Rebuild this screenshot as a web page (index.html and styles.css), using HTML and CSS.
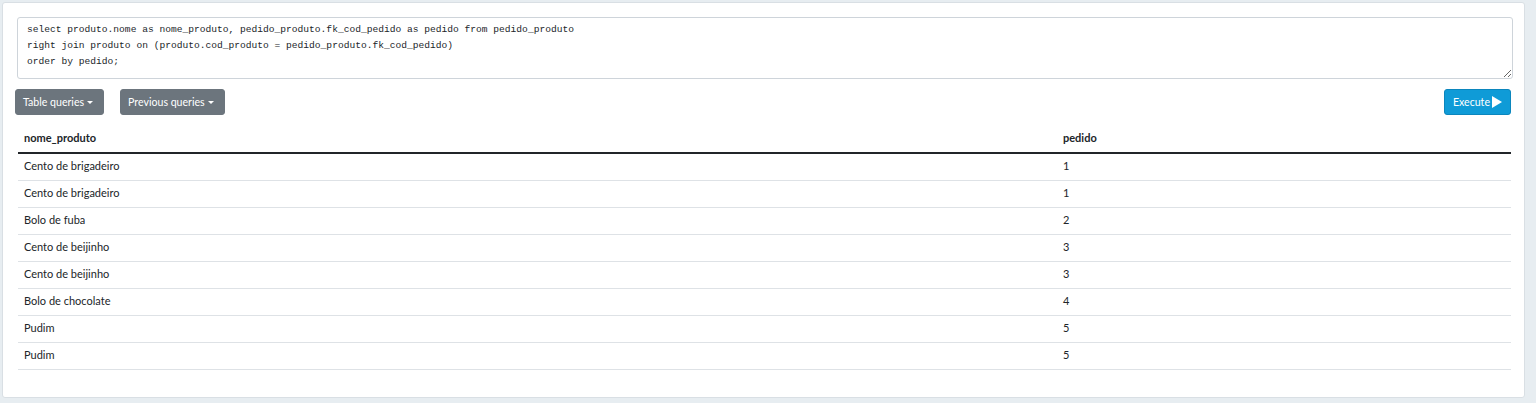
FILE: index.html
```html
<!DOCTYPE html>
<html>
<head>
<meta charset="utf-8">
<link rel="stylesheet" href="styles.css">
</head>
<body>
<div class="card">
  <textarea class="query" spellcheck="false">select produto.nome as nome_produto, pedido_produto.fk_cod_pedido as pedido from pedido_produto
right join produto on (produto.cod_produto = pedido_produto.fk_cod_pedido)
order by pedido;</textarea>
  <div class="toolbar">
    <div class="left-tools">
      <button class="btn btn-gray">Table queries <span class="caret"></span></button>
      <button class="btn btn-gray">Previous queries <span class="caret"></span></button>
    </div>
    <button class="btn btn-blue">Execute <svg class="play" width="10" height="12" viewBox="0 0 10 12"><path d="M0 0 L10 6 L0 12 Z" fill="#fff"/></svg></button>
  </div>
  <table class="results">
    <thead>
      <tr><th class="c1">nome_produto</th><th>pedido</th></tr>
    </thead>
    <tbody>
      <tr><td>Cento de brigadeiro</td><td>1</td></tr>
      <tr><td>Cento de brigadeiro</td><td>1</td></tr>
      <tr><td>Bolo de fuba</td><td>2</td></tr>
      <tr><td>Cento de beijinho</td><td>3</td></tr>
      <tr><td>Cento de beijinho</td><td>3</td></tr>
      <tr><td>Bolo de chocolate</td><td>4</td></tr>
      <tr><td>Pudim</td><td>5</td></tr>
      <tr><td>Pudim</td><td>5</td></tr>
    </tbody>
  </table>
</div>
</body>
</html>
```

FILE: styles.css
```css
html, body {
  margin: 0;
  padding: 0;
  background: #e7edf1;
  font-family: Lato, "Noto Sans", sans-serif;
  font-size: 11px;
  color: #212529;
}
.card {
  margin: 2px 0 0 2px;
  width: 1494px;
  height: 366px;
  background: #fff;
  border: 1px solid #d9dfe4;
  border-radius: 3px;
  padding: 14px 14px 14px 13px;
}
.query {
  display: block;
  box-sizing: border-box;
  width: 1496px;
  height: 62px;
  margin: 0 0 0 1px;
  padding: 4px 9px;
  border: 1px solid #ced4da;
  border-radius: 3px;
  font-family: "Liberation Mono", "DejaVu Sans Mono", monospace;
  font-size: 9.6px;
  line-height: 16px;
  color: #212529;
  resize: vertical;
  outline: none;
}
.toolbar {
  display: flex;
  justify-content: space-between;
  align-items: center;
  margin: 10px -1px 0 -1px;
}
.left-tools {
  display: flex;
  gap: 16px;
}
.btn {
  height: 26px;
  border: 1px solid transparent;
  border-radius: 3px;
  font-family: inherit;
  font-size: 10.6px;
  color: #fff;
  display: flex;
  align-items: center;
}
.btn-gray {
  background: #6c757d;
  border-color: #6c757d;
  padding: 0 10px 0 7px;
  gap: 3px;
}
.btn-blue {
  background: #0f9bd7;
  border-color: #0b86bd;
  padding: 0 8px 0 8px;
  gap: 2px;
}
.caret {
  display: inline-block;
  width: 0;
  height: 0;
  border-left: 3px solid transparent;
  border-right: 3px solid transparent;
  border-top: 3.5px solid #fff;
}
.results {
  width: 1493px;
  margin: 8px 0 0 2px;
  border-collapse: collapse;
}
.results th {
  text-align: left;
  font-weight: bold;
  height: 29px;
  padding: 0 6px;
  border-bottom: 2px solid #212529;
}
.results th.c1 {
  width: 1027px;
}
.results td {
  height: 23px;
  padding: 0 6px 3px;
  border-bottom: 1px solid #dee2e6;
}
```
